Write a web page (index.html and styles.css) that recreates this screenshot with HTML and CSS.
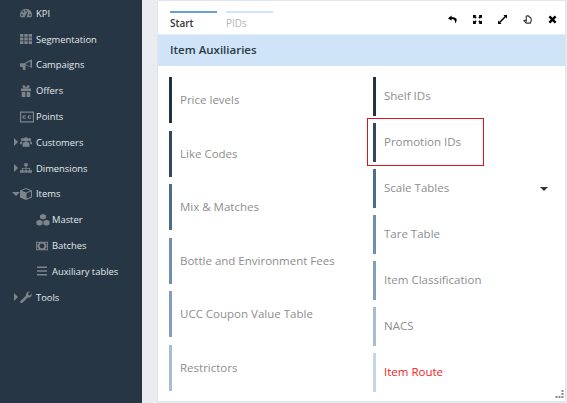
FILE: index.html
```html
<!doctype html>
<html lang="en">
<head>
<meta charset="utf-8">
<title>Item Auxiliaries</title>
<link rel="stylesheet" href="styles.css">
</head>
<body>

	<nav class="sidebar">
		<div class="navRow">
			<svg class="navIcon" viewBox="0 0 14 12"><path d="M7 1a7 7 0 0 0-7 7c0 1.300.3 2.500 1 3h12c.7-.5 1-1.700 1-3a7 7 0 0 0-7-7zM6.200 2.200h1.600v2H6.200zM2.500 4.200l1.300-1 1.200 1.500-1.200 1zM1.300 7.500h2v1.600h-2zM10.700 7.500h2v1.600h-2zM6 9.200 8.800 4.500l.8.500L8 9.800a1.200 1.200 0 1 1-2-.6z" fill-rule="evenodd"/></svg>
			<span>KPI</span>
		</div>
		<div class="navRow">
			<svg class="navIcon" viewBox="0 0 12 10"><path d="M0 0h3.400v2.800H0zM4.300 0h3.400v2.800H4.300zM8.600 0H12v2.800H8.600zM0 3.600h3.400v2.800H0zM4.300 3.600h3.400v2.800H4.300zM8.600 3.600H12v2.800H8.600zM0 7.200h3.400V10H0zM4.300 7.200h3.400V10H4.300zM8.600 7.200H12V10H8.600z"/></svg>
			<span>Segmentation</span>
		</div>
		<div class="navRow">
			<svg class="navIcon" viewBox="0 0 13 12"><path d="M0 4h4.500L11 .5 13 0v9l-2-.5L6 6v5.500H3.500L2.500 8H0zM11.300 2 6 4.700v.6l5.300 2.700z" fill-rule="evenodd"/></svg>
			<span>Campaigns</span>
		</div>
		<div class="navRow">
			<svg class="navIcon" viewBox="0 0 12 12"><path d="M1 3.500h10V6H1zM1.700 6.800h3.700V12H1.700zM6.600 6.800h3.700V12H6.600zM5 3.300C3.500 3.300 2.500 2.500 2.500 1.500S3.500 0 4.300.3C5.200.6 5.600 1.800 6 3.300 6.400 1.800 6.800.6 7.700.3c.8-.3 1.800.2 1.800 1.200S8.500 3.300 7 3.300z"/></svg>
			<span>Offers</span>
		</div>
		<div class="navRow">
			<svg class="navIcon wide" viewBox="0 0 14 11"><path d="M0 0h14v11H0zM1.200 1.200v8.600h11.600V1.200zM6.300 4.200C4 3 2.400 4 2.400 5.500S4 8 6.300 6.800l-.5-.9c-1.300.6-2.200.3-2.200-.4s.9-1 2.200-.4zM11.500 4.200C9.200 3 7.600 4 7.600 5.500S9.200 8 11.500 6.800l-.5-.9c-1.300.6-2.200.3-2.200-.4s.9-1 2.200-.4z" fill-rule="evenodd"/></svg>
			<span>Points</span>
		</div>
		<div class="navRow">
			<i class="caretRight"></i>
			<svg class="navIcon" viewBox="0 0 14 11"><circle cx="3" cy="2.600" r="1.900"/><circle cx="11" cy="2.600" r="1.900"/><circle cx="7" cy="2.600" r="2.600"/><path d="M0 8V6.500C0 5.500.8 5 2 5h1c-.8.800-1 1.800-1 3zM14 8V6.500c0-1-.8-1.500-2-1.500h-1c.8.800 1 1.800 1 3zM3 11V8c0-1.500 1-2.500 2.500-2.500h3C10 5.500 11 6.500 11 8v3z"/></svg>
			<span>Customers</span>
		</div>
		<div class="navRow">
			<i class="caretRight"></i>
			<svg class="navIcon" viewBox="0 0 14 11"><path d="M5 0h4v3.500H7.500v2h4.300V8H14v3H9.500V8h1.300V6.500h-3.300V8H9v3H5V8h1.500V6.500H3.200V8h1.300v3H0V8h2.200V5.500h4.300v-2H5z"/></svg>
			<span>Dimensions</span>
		</div>
		<div class="navRow">
			<i class="caretDown"></i>
			<svg class="navIcon" viewBox="0 0 12 12"><path d="M6 0 12 2.400v7L6 12 0 9.400v-7zM1.800 2.700 6 4.400l4.200-1.700L6 1.100zM6.600 5.300v5.200l4.300-1.800V3.600z" fill-rule="evenodd"/></svg>
			<span>Items</span>
		</div>
		<div class="navRow sub">
			<svg class="navIcon wide" viewBox="0 0 14 12"><path d="M7 0 10 1.200v3L7 5.400 4 4.200v-3zM3.500 5.800l3 1.200v3.500l-3 1.300L.5 10.500V7zM10.500 5.800l3 1.200v3.500l-3 1.300-3-1.300V7z"/></svg>
			<span>Master</span>
		</div>
		<div class="navRow sub">
			<svg class="navIcon" viewBox="0 0 13 9"><path d="M0 0h13v9H0zM1 1v7h2.500A4 4 0 0 1 3.500 1zM12 1H9.500a4 4 0 0 1 0 7H12zM6.500 1.800a2.700 2.700 0 1 0 0 5.400 2.700 2.700 0 0 0 0-5.400z" fill-rule="evenodd"/></svg>
			<span>Batches</span>
		</div>
		<div class="navRow sub">
			<svg class="navIcon" viewBox="0 0 12 10"><path d="M1 .5h10v1.400H1zM1 4.300h10v1.400H1zM1 8.100h10v1.400H1z"/></svg>
			<span>Auxiliary tables</span>
		</div>
		<div class="navRow">
			<i class="caretRight"></i>
			<svg class="navIcon" viewBox="0 0 12 12"><path d="M.3 10.300 6 4.700C5.600 2.500 7.300.2 10 .5L8 2.500l.3 1.600 1.600.3 1.800-2c.6 2.800-1.800 4.700-4 4.200l-5.700 5.600c-.8.600-2.500-1-1.700-1.900z"/></svg>
			<span>Tools</span>
		</div>
	</nav>

	<main class="content">
		<section class="panel">

			<header class="panelTop">
				<div class="tabs">
					<div class="tab active">Start</div>
					<div class="tab">PIDs</div>
				</div>
				<div class="tools">
					<svg viewBox="0 0 10 9"><path d="M4 0 0 3l4 3V4c2.500 0 4 1 4 5 1.500-2 2-3.500 1.500-5C9 2.500 7 2 4 2z"/></svg>
					<svg viewBox="0 0 9 9"><path d="M0 0h3.400L2.400 1 3.700 2.300 2.300 3.700 1 2.400 0 3.400zM9 0v3.400L8 2.400 6.700 3.700 5.300 2.300 6.600 1l-1-1zM0 9V5.600l1 1 1.300-1.300 1.400 1.400L2.400 8l1 1zM9 9H5.600l1-1-1.300-1.300 1.400-1.400L8 6.600l1-1z"/></svg>
					<svg viewBox="0 0 10 10"><path d="M6 0h4v4L8.600 2.600 2.600 8.600 4 10H0V6l1.400 1.400 6-6z"/></svg>
					<svg viewBox="0 0 10 10"><path class="hand" d="M3.500 1.500 5.500.8 8.800 3.500 9.300 6 8 9H3.600L1 6.200l1.200-.6 1.600 1z"/></svg>
					<svg viewBox="0 0 8 8"><path d="M2 .5 4 2.500 6 .5 7.500 2 5.500 4l2 2L6 7.500l-2-2-2 2L.5 6l2-2-2-2z"/></svg>
				</div>
			</header>

			<h2 class="panelTitle">Item Auxiliaries</h2>

			<div class="columns">
				<div class="col left">
					<a class="item c1">Price levels</a>
					<a class="item c2">Like Codes</a>
					<a class="item c3">Mix &amp; Matches</a>
					<a class="item c4">Bottle and Environment Fees</a>
					<a class="item c5">UCC Coupon Value Table</a>
					<a class="item c6">Restrictors</a>
				</div>
				<div class="col right">
					<a class="item c1">Shelf IDs</a>
					<a class="item c2 marked">Promotion IDs</a>
					<a class="item c3">Scale Tables<i class="caretMenu"></i></a>
					<a class="item c4">Tare Table</a>
					<a class="item c5">Item Classification</a>
					<a class="item c6">NACS</a>
					<a class="item c7 red">Item Route</a>
				</div>
			</div>

			<svg class="grip" viewBox="0 0 9 9"><path d="M6.500 0h2v2h-2zM6.500 3h2v2h-2zM6.500 6h2v2h-2zM3.500 6h2v2h-2zM.5 6h2v2h-2z"/></svg>
		</section>
	</main>

</body>
</html>
```

FILE: styles.css
```css
html, body { height: 100%; margin: 0; overflow: hidden; }
body { display: flex; font: 9.400px "Open Sans", sans-serif; width: 567px; height: 403px; }

.sidebar { background-color: #263644; color: #e4e8ec; flex: none; padding-top: 0.5px; width: 142px; }
.navRow { align-items: center; display: flex; height: 25.8px; padding-left: 20px; position: relative; }
.navRow span { position: absolute; left: 36px; }
.navRow.sub { padding-left: 36px; }
.navRow.sub span { left: 52px; }
.navIcon { fill: #7d858b; flex: none; height: 12px; width: 12px; }
.navIcon.wide { width: 14px; }

.caretRight, .caretDown { height: 0; position: absolute; width: 0; }
.caretRight { border-bottom: 4px solid transparent; border-left: 4px solid #7d858b; border-top: 4px solid transparent; left: 14px; top: 9px; }
.caretDown { border-left: 4px solid transparent; border-right: 4px solid transparent; border-top: 4px solid #7d858b; left: 12px; top: 11px; }

.content { background-color: #e9edf2; flex: 1; padding: 1px 2px 2px 16px; }
.panel { background-color: #fff; box-shadow: 0 0 1px #bbb; display: flex; flex-direction: column; height: 100%; position: relative; }

.panelTop { align-items: flex-start; border-bottom: 1px solid #e4eef7; display: flex; height: 33px; justify-content: space-between; }
.tabs { display: flex; gap: 9px; padding: 10px 0 0 12px; }
.tab { border-top: 2.500px solid #cfe4f6; color: #b5b5b5; font-size: 10px; line-height: 15px; padding-top: 3px; width: 47px; }
.tab.active { border-top-color: #6a9fd0; color: #333; font-weight: 600; }

.tools { align-items: center; display: flex; gap: 16px; padding: 14px 8px 0 0; }
.tools svg { display: block; height: 9px; width: 9px; }
.hand { fill: none; stroke: #333; stroke-width: 1.2; }

.panelTitle { background-color: #cfe4f6; color: #2b3a47; font-size: 11.500px; font-weight: 600; line-height: 30px; margin: 0; padding: 0 0 1px 12px; }

.columns { display: flex; padding: 11px 0 0 11px; }
.col { display: flex; flex-direction: column; }
.col.left { gap: 7.500px; width: 204px; }
.col.right { gap: 7px; width: 178px; }
.col.left .item { height: 46px; padding-bottom: 1px; }
.col.right .item { height: 39px; padding-bottom: 2px; }

.item { align-items: center; border-left: 3px solid #263644; box-sizing: border-box; color: #8e8e8e; display: flex; font-size: 11.500px; padding-left: 8px; position: relative; }
.c1 { border-left-color: #1f3246; }
.c2 { border-left-color: #31495f; }
.c3 { border-left-color: #4d6d8e; }
.c4 { border-left-color: #6d8fb0; }
.c5 { border-left-color: #82a0bd; }
.c6 { border-left-color: #a6bdd1; }
.c7 { border-left-color: #c6d6e3; }
.item.red { color: #f01c1c; }

.item.marked::after { border: 1px solid #d9131f; content: ""; height: 46px; left: -9px; position: absolute; top: -5px; width: 115px; }

.caretMenu { border-left: 4px solid transparent; border-right: 4px solid transparent; border-top: 4px solid #333; height: 0; position: absolute; right: 3px; top: 18px; width: 0; }

.grip { bottom: 2px; fill: #888; height: 9px; position: absolute; right: 1px; width: 9px; }
```
